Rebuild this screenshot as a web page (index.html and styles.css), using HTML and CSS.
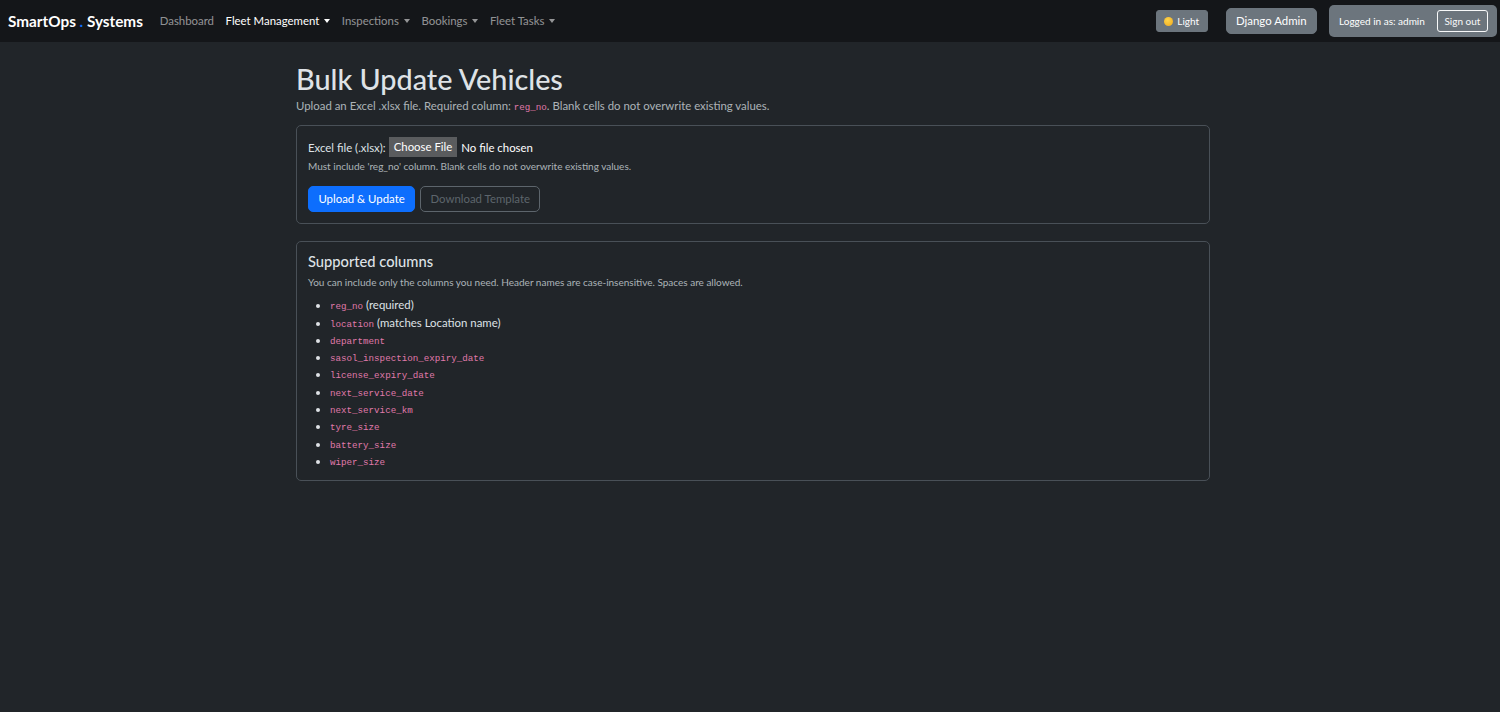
FILE: index.html
```html
<!DOCTYPE html>
<html lang="en">
  <head>
    <meta charset="UTF-8" />
    <meta name="viewport" content="width=device-width, initial-scale=1.0" />
    <title>Bulk Update Vehicles</title>
    <link rel="stylesheet" href="styles.css">
  </head>
  <body>
    <!-- Top navigation -->
    <nav class="navbar">
      <a class="brand" href="#">SmartOps <span class="brand-dot">.</span> Systems</a>
      <ul class="nav-links">
        <li><a href="#">Dashboard</a></li>
        <li><a href="#" class="active dropdown">Fleet Management</a></li>
        <li><a href="#" class="dropdown">Inspections</a></li>
        <li><a href="#" class="dropdown">Bookings</a></li>
        <li><a href="#" class="dropdown">Fleet Tasks</a></li>
      </ul>
      <div class="nav-right">
        <button class="btn btn-secondary btn-sm theme-toggle"><span class="sun"></span>Light</button>
        <a href="#" class="btn btn-secondary">Django Admin</a>
        <div class="user-box">
          <span>Logged in as: admin</span>
          <button class="btn btn-outline-light btn-sm">Sign out</button>
        </div>
      </div>
    </nav>

    <main class="container">
      <h1>Bulk Update Vehicles</h1>
      <p class="lead-muted">
        Upload an Excel .xlsx file. Required column: <code>reg_no</code>. Blank cells do not overwrite existing values.
      </p>

      <!-- Upload form -->
      <div class="card">
        <form class="upload-form">
          <div class="file-row">
            <label for="file">Excel file (.xlsx):</label>
            <span class="file-input">
              <span class="file-btn">Choose File</span>
              <span class="file-name">No file chosen</span>
            </span>
          </div>
          <div class="form-text">Must include 'reg_no' column. Blank cells do not overwrite existing values.</div>
          <div class="actions">
            <button type="button" class="btn btn-primary">Upload &amp; Update</button>
            <button type="button" class="btn btn-outline-secondary" disabled>Download Template</button>
          </div>
        </form>
      </div>

      <!-- Column reference -->
      <div class="card">
        <h5>Supported columns</h5>
        <p class="small-muted">You can include only the columns you need. Header names are case-insensitive. Spaces are allowed.</p>
        <ul class="columns">
          <li><code>reg_no</code> (required)</li>
          <li><code>location</code> (matches Location name)</li>
          <li><code>department</code></li>
          <li><code>sasol_inspection_expiry_date</code></li>
          <li><code>license_expiry_date</code></li>
          <li><code>next_service_date</code></li>
          <li><code>next_service_km</code></li>
          <li><code>tyre_size</code></li>
          <li><code>battery_size</code></li>
          <li><code>wiper_size</code></li>
        </ul>
      </div>
    </main>
  </body>
</html>
```

FILE: styles.css
```css
:root {
  --body-bg: #212529;
  --nav-bg: #141619;
  --text: #dee2e6;
  --muted: rgba(222, 226, 230, 0.75);
  --border: #495057;
  --primary: #0d6efd;
  --secondary: #6c757d;
  --code: #e07aab;
  --radius: 5px;
}

* {
  box-sizing: border-box;
}

body {
  margin: 0;
  font-family: Lato, "Noto Sans", sans-serif;
  font-size: 11.4px;
  line-height: 1.5;
  background-color: var(--body-bg);
  color: var(--text);
}

a {
  text-decoration: none;
  color: inherit;
}

code {
  font-family: "Liberation Mono", "DejaVu Sans Mono", monospace;
  font-size: 9.2px;
  line-height: 1;
  color: var(--code);
}

/* Navbar */
.navbar {
  display: flex;
  align-items: center;
  height: 42px;
  padding: 0 3px 0 8px;
  background-color: var(--nav-bg);
}

.brand {
  font-size: 15.3px;
  font-weight: 700;
  color: #fff;
  margin-right: 11px;
}

.brand-dot {
  color: var(--primary);
}

.nav-links {
  display: flex;
  list-style: none;
  margin: 0;
  padding: 0;
}

.nav-links a {
  display: block;
  padding: 6px 5.8px;
  color: rgba(255, 255, 255, 0.55);
}

.nav-links a.active {
  color: #fff;
}

.dropdown::after {
  content: "";
  display: inline-block;
  margin-left: 5px;
  vertical-align: 2px;
  border-top: 4px solid;
  border-left: 3.5px solid transparent;
  border-right: 3.5px solid transparent;
}

.nav-right {
  display: flex;
  align-items: center;
  margin-left: auto;
  gap: 12px;
}

.btn {
  display: inline-block;
  font-family: inherit;
  font-size: 11.4px;
  line-height: 16px;
  padding: 4px 9.4px;
  border: 1px solid transparent;
  border-radius: var(--radius);
  cursor: pointer;
}

.btn-sm {
  font-size: 10px;
  line-height: 15px;
  padding: 2.5px 6.6px;
  border-radius: 3px;
}

.btn-secondary {
  background-color: var(--secondary);
  border-color: var(--secondary);
  color: #fff;
}

.btn-primary {
  background-color: var(--primary);
  border-color: var(--primary);
  color: #fff;
}

.btn-outline-light {
  background: transparent;
  border-color: #f8f9fa;
  color: #f8f9fa;
}

.btn-outline-secondary {
  background: transparent;
  border-color: var(--secondary);
  color: var(--secondary);
}

.btn:disabled {
  opacity: 0.8;
  cursor: default;
}

.theme-toggle {
  display: flex;
  align-items: center;
  gap: 4px;
  padding-left: 7.5px;
  padding-right: 7.5px;
  margin-right: 6px;
}

.sun {
  width: 9px;
  height: 9px;
  border-radius: 50%;
  background: radial-gradient(circle at 40% 35%, #ffd54a, #f0a81c);
}

.user-box {
  display: flex;
  align-items: center;
  gap: 12px;
  padding: 4px 9px 4px 10px;
  height: 32px;
  background-color: var(--secondary);
  border-radius: var(--radius);
  color: #fff;
  font-size: 10px;
}

/* Page body */
.container {
  width: 920px;
  margin: 0 auto;
  padding: 20px 0 0 6px;
}

h1 {
  margin: 0;
  font-size: 28.8px;
  font-weight: 500;
  line-height: 1.2;
  color: var(--text);
}

.lead-muted {
  margin: 0 0 11px;
  color: var(--muted);
}

.card {
  border: 1px solid var(--border);
  border-radius: var(--radius);
  padding: 11px 11px 11px;
  margin-bottom: 17px;
}

.file-row {
  display: flex;
  align-items: center;
  gap: 3px;
  min-height: 21px;
}

.file-input {
  display: flex;
  align-items: center;
  gap: 4px;
  color: #fff;
}

.file-btn {
  background-color: #5a5c5e;
  padding: 1px 5px;
  line-height: 18px;
}

.form-text {
  margin-top: 1px;
  font-size: 10px;
  color: var(--muted);
}

.actions {
  display: flex;
  gap: 5px;
  margin-top: 12px;
}

h5 {
  margin: 0 0 5px;
  font-size: 14.7px;
  font-weight: 500;
  line-height: 1.2;
}

.small-muted {
  margin: 0 0 6px;
  font-size: 10px;
  color: var(--muted);
}

.columns {
  margin: 0;
  padding-left: 22px;
}

.columns li {
  line-height: 17.3px;
}
```
